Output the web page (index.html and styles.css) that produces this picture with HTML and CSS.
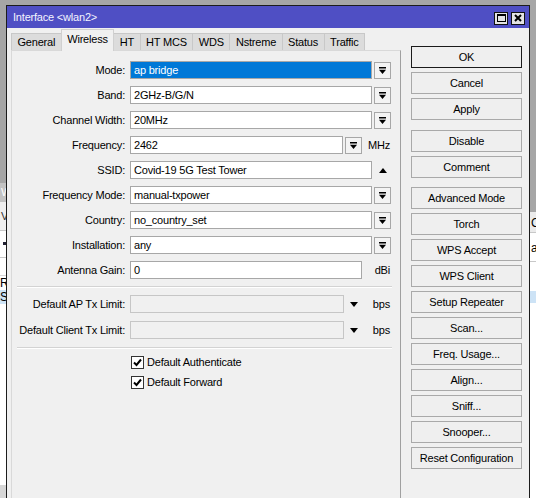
FILE: index.html
```html
<!DOCTYPE html>
<html lang="en">

<head>
    <meta charset="utf-8">
    <meta name="viewport" content="width=device-width, initial-scale=1.0">
    <title>Interface &lt;wlan2&gt;</title>
    <link rel="stylesheet" href="styles.css">
</head>

<body>
    <div class="desk">
        <!-- windows behind the dialog -->
        <div class="bgwin left">
            <div class="lw-title">W</div>
            <div class="lw-tabs">V</div>
            <div class="lw-tool"><span class="dot"></span></div>
            <div class="lw-blank"></div>
            <div class="lw-row">R</div>
            <div class="lw-row hl">S</div>
            <div class="lw-fill"></div>
            <div class="lw-status"></div>
        </div>
        <div class="bgwin right">
            <div class="rw-head">C</div>
            <div class="rw-row">a</div>
            <div class="rw-blank"></div>
            <div class="rw-row hl"></div>
        </div>

        <div class="win">
            <div class="titlebar">
                <span class="title">Interface &lt;wlan2&gt;</span>
                <div class="tb-btns">
                    <span class="tb-btn"><span class="sq"></span></span>
                    <span class="tb-btn">
                        <svg width="8" height="8" viewBox="0 0 8 8"><path d="M1 1L7 7M7 1L1 7" stroke="#000" stroke-width="2"/></svg>
                    </span>
                </div>
            </div>

            <div class="winbody">
                <div class="main">
                    <div class="tabs">
                        <span class="tab">General</span>
                        <span class="tab sel">Wireless</span>
                        <span class="tab">HT</span>
                        <span class="tab">HT MCS</span>
                        <span class="tab">WDS</span>
                        <span class="tab">Nstreme</span>
                        <span class="tab">Status</span>
                        <span class="tab">Traffic</span>
                    </div>

                    <div class="panel">
                        <div class="row">
                            <span class="lbl">Mode:</span>
                            <span class="inp sel">ap bridge</span>
                            <span class="dd"><svg width="7" height="7" viewBox="0 0 7 7"><rect width="7" height="1.5"/><polygon points="0,2.8 7,2.8 3.5,7"/></svg></span>
                        </div>
                        <div class="row">
                            <span class="lbl">Band:</span>
                            <span class="inp">2GHz-B/G/N</span>
                            <span class="dd"><svg width="7" height="7" viewBox="0 0 7 7"><rect width="7" height="1.5"/><polygon points="0,2.8 7,2.8 3.5,7"/></svg></span>
                        </div>
                        <div class="row">
                            <span class="lbl">Channel Width:</span>
                            <span class="inp">20MHz</span>
                            <span class="dd"><svg width="7" height="7" viewBox="0 0 7 7"><rect width="7" height="1.5"/><polygon points="0,2.8 7,2.8 3.5,7"/></svg></span>
                        </div>
                        <div class="row">
                            <span class="lbl">Frequency:</span>
                            <span class="inp freq">2462</span>
                            <span class="dd"><svg width="7" height="7" viewBox="0 0 7 7"><rect width="7" height="1.5"/><polygon points="0,2.8 7,2.8 3.5,7"/></svg></span>
                            <span class="unit">MHz</span>
                        </div>
                        <div class="row">
                            <span class="lbl">SSID:</span>
                            <span class="inp">Covid-19 5G Test Tower</span>
                            <span class="arr up"><svg width="8" height="5" viewBox="0 0 8 5"><polygon points="0,5 8,5 4,0"/></svg></span>
                        </div>
                        <div class="row">
                            <span class="lbl">Frequency Mode:</span>
                            <span class="inp">manual-txpower</span>
                            <span class="dd"><svg width="7" height="7" viewBox="0 0 7 7"><rect width="7" height="1.5"/><polygon points="0,2.8 7,2.8 3.5,7"/></svg></span>
                        </div>
                        <div class="row">
                            <span class="lbl">Country:</span>
                            <span class="inp">no_country_set</span>
                            <span class="dd"><svg width="7" height="7" viewBox="0 0 7 7"><rect width="7" height="1.5"/><polygon points="0,2.8 7,2.8 3.5,7"/></svg></span>
                        </div>
                        <div class="row">
                            <span class="lbl">Installation:</span>
                            <span class="inp">any</span>
                            <span class="dd"><svg width="7" height="7" viewBox="0 0 7 7"><rect width="7" height="1.5"/><polygon points="0,2.8 7,2.8 3.5,7"/></svg></span>
                        </div>
                        <div class="row">
                            <span class="lbl">Antenna Gain:</span>
                            <span class="inp gain">0</span>
                            <span class="unit">dBi</span>
                        </div>

                        <div class="sep first"></div>

                        <div class="row tx">
                            <span class="lbl">Default AP Tx Limit:</span>
                            <span class="inp limit dis"></span>
                            <span class="arr"><svg width="8" height="5" viewBox="0 0 8 5"><polygon points="0,0 8,0 4,5"/></svg></span>
                            <span class="unit bps">bps</span>
                        </div>
                        <div class="row tx">
                            <span class="lbl">Default Client Tx Limit:</span>
                            <span class="inp limit dis"></span>
                            <span class="arr"><svg width="8" height="5" viewBox="0 0 8 5"><polygon points="0,0 8,0 4,5"/></svg></span>
                            <span class="unit bps">bps</span>
                        </div>

                        <div class="sep second"></div>

                        <div class="check">
                            <span class="box"><svg width="11" height="11" viewBox="0 0 11 11"><polyline points="2,5.5 4.5,8 9,2.5" fill="none" stroke="#000" stroke-width="2"/></svg></span>
                            <span>Default Authenticate</span>
                        </div>
                        <div class="check">
                            <span class="box"><svg width="11" height="11" viewBox="0 0 11 11"><polyline points="2,5.5 4.5,8 9,2.5" fill="none" stroke="#000" stroke-width="2"/></svg></span>
                            <span>Default Forward</span>
                        </div>
                    </div>
                </div>

                <div class="buttons">
                    <button class="btn ok">OK</button>
                    <button class="btn">Cancel</button>
                    <button class="btn">Apply</button>
                    <button class="btn grp">Disable</button>
                    <button class="btn">Comment</button>
                    <button class="btn grp2">Advanced Mode</button>
                    <button class="btn">Torch</button>
                    <button class="btn">WPS Accept</button>
                    <button class="btn">WPS Client</button>
                    <button class="btn">Setup Repeater</button>
                    <button class="btn">Scan...</button>
                    <button class="btn">Freq. Usage...</button>
                    <button class="btn">Align...</button>
                    <button class="btn">Sniff...</button>
                    <button class="btn">Snooper...</button>
                    <button class="btn">Reset Configuration</button>
                </div>
            </div>
        </div>
    </div>
</body>

</html>
```

FILE: styles.css
```css
* {
    box-sizing: border-box;
}

body {
    margin: 0;
    background-color: #a6a6a6;
    font-family: "Liberation Sans", Arial, sans-serif;
    font-size: 11px;
    letter-spacing: -0.2px;
    color: #000;
    overflow: hidden;
}

.desk {
    position: relative;
    width: 536px;
    height: 498px;
    overflow: hidden;
}

/* windows in the background */
.bgwin {
    position: absolute;
    overflow: hidden;
    white-space: nowrap;
    line-height: 1;
}

.bgwin.left {
    left: 0;
    top: 183px;
    width: 6px;
    height: 315px;
    display: flex;
    flex-direction: column;
}

.lw-title {
    height: 19px;
    background-color: #c3c3c3;
    color: #fff;
    padding: 4px 0 0 1px;
}

.lw-tabs {
    height: 29px;
    background-color: #efefef;
    border-bottom: 1px solid #c8c8c8;
    padding: 9px 0 0 1px;
    color: #333;
}

.lw-tool {
    height: 27px;
    background-color: #fff;
    border-bottom: 1px solid #c8c8c8;
    padding: 11px 0 0 3px;
}

.dot {
    display: block;
    width: 3px;
    height: 3px;
    background-color: #223;
}

.lw-blank {
    height: 18px;
    background-color: #fff;
    border-bottom: 1px solid #d8d8d8;
}

.lw-row {
    height: 14px;
    background-color: #fff;
    padding: 1px 0 0 0;
    font-size: 12px;
}

.lw-row.hl {
    background-color: #cde3f6;
}

.lw-fill {
    flex: 1;
    background-color: #fff;
}

.lw-status {
    height: 13px;
    background-color: #d6d6d6;
}

.bgwin.right {
    left: 530px;
    top: 212px;
    width: 6px;
    height: 286px;
    background-color: #fff;
}

.rw-head {
    height: 21px;
    background-color: #ebebeb;
    border-bottom: 1px solid #c8c8c8;
    padding: 5px 0 0 1px;
    font-size: 12px;
}

.rw-row {
    height: 29px;
    border-bottom: 1px solid #c8c8c8;
    padding: 9px 0 0 1px;
    font-size: 12px;
}

.rw-blank {
    height: 29px;
}

.rw-row.hl {
    height: 12px;
    padding: 0;
    border: 0;
    background-color: #cde3f6;
}

/* the dialog */
.win {
    position: absolute;
    left: 6px;
    top: 5px;
    width: 524px;
    height: 510px;
    border: 1px solid #1c1c1c;
    background-color: #f0f0f0;
}

.titlebar {
    height: 22px;
    background-color: #4f4fc4;
    color: #f4f4ff;
    display: flex;
    align-items: center;
    justify-content: space-between;
    padding: 0 4px 0 6px;
}

.tb-btns {
    display: flex;
    gap: 3px;
    margin-top: 2px;
}

.tb-btn {
    width: 14px;
    height: 13px;
    background-color: #e4e4e4;
    border: 1px solid #111;
    display: flex;
    align-items: center;
    justify-content: center;
}

.sq {
    width: 9px;
    height: 8px;
    border: 1px solid #000;
    border-top-width: 2px;
}

.winbody {
    display: flex;
    align-items: flex-start;
}

.main {
    width: 394px;
}

.tabs {
    display: flex;
    align-items: flex-end;
    height: 22px;
    padding-left: 4px;
}

.tab {
    height: 17px;
    line-height: 17px;
    padding: 0 5.5px;
    border: 1px solid #c8c8c8;
    border-bottom: 0;
    margin-right: -1px;
    background-color: #dcdcdc;
    white-space: nowrap;
}

.tab.sel {
    position: relative;
    height: 22px;
    line-height: 19px;
    margin-bottom: -1px;
    background-color: #f0f0f0;
    border-color: #d0d0d0;
    z-index: 1;
}

.panel {
    margin-left: 4px;
    height: 470px;
    padding-top: 10px;
    border-top: 1px solid #d9d9d9;
    border-left: 1px solid #d9d9d9;
    border-right: 1px solid #a0a0a0;
}

.row {
    display: flex;
    align-items: center;
    height: 18px;
    margin-bottom: 7px;
    white-space: nowrap;
}

.row.tx {
    margin-bottom: 8px;
}

.lbl {
    width: 113px;
    text-align: right;
}

.inp {
    width: 242px;
    height: 18px;
    margin-left: 5px;
    padding: 0 3px;
    line-height: 16px;
    border: 1px solid #a7a7a7;
    background-color: #fff;
    overflow: hidden;
}

.inp.sel {
    background-color: #0078d7;
    color: #fff;
}

.inp.freq {
    width: 213px;
}

.inp.gain {
    width: 232px;
}

.inp.limit {
    width: 214px;
}

.inp.dis {
    background-color: #f0f0f0;
    border-color: #c6c6c6;
}

.dd {
    width: 17px;
    height: 17px;
    margin-left: 2px;
    border: 1px solid #a7a7a7;
    background-color: #f4f4f4;
    display: flex;
    align-items: center;
    justify-content: center;
}

.arr {
    width: 20px;
    display: flex;
    justify-content: center;
}

.arr.up {
    width: 22px;
}

.unit {
    width: 28px;
    text-align: right;
}

.unit.bps {
    width: 26px;
}

.sep {
    height: 2px;
    border-top: 1px solid #d3d3d3;
    border-bottom: 1px solid #fff;
    margin: 0 8px 0 5px;
}

.sep.first {
    margin-top: 3px;
    margin-bottom: 7px;
}

.sep.second {
    margin-bottom: 3px;
}

.check {
    display: flex;
    align-items: center;
    height: 20px;
    padding-left: 119px;
}

.box {
    width: 13px;
    height: 13px;
    margin-right: 3px;
    border: 1px solid #333;
    background-color: #fff;
    display: flex;
    align-items: center;
    justify-content: center;
}

.buttons {
    width: 111px;
    margin: 18px 0 0 10px;
    display: flex;
    flex-direction: column;
}

.btn {
    height: 22px;
    margin: 0 0 4px 0;
    padding: 0;
    border: 1px solid #a9a9a9;
    background-color: #efefef;
    font-family: "Liberation Sans", Arial, sans-serif;
    font-size: 11px;
    letter-spacing: -0.2px;
    color: #000;
}

.btn.ok {
    border-color: #1b1b1b;
}

.btn.grp {
    margin-top: 6px;
}

.btn.grp2 {
    margin-top: 5px;
}
```
